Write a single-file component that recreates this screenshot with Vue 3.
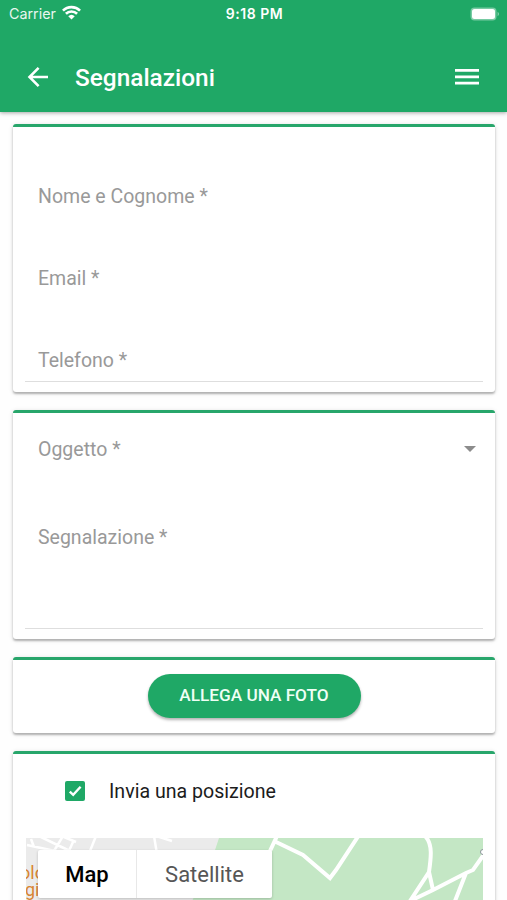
<template>
  <div class="page">
    <header class="header">
      <div class="status">
        <div class="status__left">
          <span class="status__carrier">Carrier</span>
          <svg class="status__wifi" viewBox="0 0 18 14">
            <path d="M0.9 5.2a11.6 11.6 0 0 1 16.2 0" />
            <path d="M3.7 8.2a7.6 7.6 0 0 1 10.6 0" />
            <path class="status__dot" d="M5.9 10.6a4.5 4.5 0 0 1 6.2 0L9 13.7z" />
          </svg>
        </div>
        <span class="status__time">9:18 PM</span>
        <div class="status__right">
          <svg class="status__battery" viewBox="0 0 30 14">
            <rect x="0.5" y="0.5" width="26" height="13" rx="4" fill="#fff" fill-opacity="0.4" />
            <rect x="2" y="2" width="23" height="10" rx="2.5" fill="#fff" />
            <path d="M27.6 4.8a2.5 2.5 0 0 1 0 4.4z" fill="#fff" fill-opacity="0.5" />
          </svg>
        </div>
      </div>

      <div class="toolbar">
        <svg class="toolbar__back" viewBox="0 0 22 22">
          <path d="M21 11H2.5M11.6 1.8L2.5 11l9.1 9.2" />
        </svg>
        <h1 class="toolbar__title">Segnalazioni</h1>
        <svg class="toolbar__menu" viewBox="0 0 24 16">
          <path d="M0 1.4h24M0 7.8h24M0 14.2h24" />
        </svg>
      </div>
    </header>

    <main class="content">
      <section class="card card--contacts">
        <div class="field" v-for="label in contacts" :key="label">
          <label class="label">{{ label }}</label>
        </div>
      </section>

      <section class="card card--report">
        <div class="select">
          <label class="label">Oggetto *</label>
          <svg class="select__arrow" viewBox="0 0 12 6">
            <path d="M0 0h12L6 6z" />
          </svg>
        </div>
        <div class="textarea">
          <label class="label">Segnalazione *</label>
        </div>
      </section>

      <section class="card card--photo">
        <button class="button" type="button">ALLEGA UNA FOTO</button>
      </section>

      <section class="card card--position">
        <div class="check" @click="sendPosition = !sendPosition">
          <span class="check__box" :class="{ active: sendPosition }">
            <svg v-if="sendPosition" viewBox="0 0 20 20">
              <path d="M4.8 10.6l3.4 3.2 7.4-8" />
            </svg>
          </span>
          <span class="check__text">Invia una posizione</span>
        </div>

        <div class="map">
          <svg class="map__tiles" viewBox="0 0 457 70">
            <path d="M193 0H457V70H163L189 12z" fill="#c4e7c5" />
            <path
              class="map__road map__road--thin"
              d="M5 1l3 8M1 7l28 6M15-1l31 15M37-2l-9 15M47 4l-5 11M70-2l-6 15M128-2l3 18M127-3l19 6M38-1l12 5"
            />
            <path
              class="map__road"
              d="M251-2l-7 15M248 3l29 14 27 23 6-8 23-35M399-2c8 8 6 22 4 36l-19 29M403 34l4 18M384 63l23-11 33-17 7-3 12-17M440 35l-11 28"
            />
            <text x="-6" y="41">olo</text>
            <text x="-1" y="58">gio</text>
            <circle cx="457" cy="14" r="2.5" fill="#fff" stroke="#8a9499" />
          </svg>
          <div class="map__types">
            <button
              v-for="type in mapTypes"
              :key="type"
              class="map__type"
              :class="{ active: mapType === type }"
              type="button"
              @click="mapType = type"
            >
              {{ type }}
            </button>
          </div>
        </div>
      </section>
    </main>
  </div>
</template>

<script setup>
import { ref } from 'vue'

const contacts = ['Nome e Cognome *', 'Email *', 'Telefono *']
const mapTypes = ['Map', 'Satellite']

const sendPosition = ref(true)
const mapType = ref('Map')
</script>

<style>
body {
  margin: 0;
  background: #fefefe;
}
</style>

<style scoped>
.page {
  height: 900px;
  overflow: hidden;
  font-family: Roboto, sans-serif;
  background: #fefefe;
}

.page * {
  box-sizing: border-box;
}

/* Header */
.header {
  position: relative;
  height: 112px;
  color: #fff;
  background: #1fa866;
  box-shadow: 0 1px 4px rgba(0, 0, 0, 0.35);
}

.status {
  display: grid;
  grid-template-columns: 1fr auto 1fr;
  align-items: center;
  height: 27px;
  padding: 0 7px 0 9px;
  font-family: Inter, sans-serif;
  font-size: 14px;
  line-height: 20px;
}

.status__left {
  display: flex;
  align-items: center;
  gap: 6px;
}

.status__carrier {
  font-size: 14.3px;
  opacity: 0.9;
}

.status__wifi {
  width: 19px;
  height: 15px;
  margin-top: -2px;
  fill: none;
  stroke: #fff;
  stroke-width: 2.5;
}

.status__dot {
  fill: #fff;
  stroke: none;
}

.status__time {
  font-size: 14px;
  font-weight: 600;
  letter-spacing: 0.5px;
}

.status__right {
  display: flex;
  justify-content: flex-end;
}

.status__battery {
  width: 30px;
  height: 14px;
}

.toolbar {
  display: flex;
  align-items: center;
  height: 85px;
  padding: 16px 28px 0 27px;
}

.toolbar__back {
  width: 22px;
  height: 22px;
  margin-top: -1px;
  fill: none;
  stroke: #fff;
  stroke-width: 2.6;
}

.toolbar__title {
  flex: 1;
  margin: 0 0 0 26px;
  font-weight: 500;
  font-size: 24.4px;
  line-height: 30px;
}

.toolbar__menu {
  width: 24px;
  height: 16px;
  margin-top: -2px;
  fill: none;
  stroke: #fff;
  stroke-width: 2.8;
}

/* Cards */
.content {
  padding: 12px 12px 0 13px;
}

.card {
  padding: 0 12px;
  margin-bottom: 18px;
  border-top: 3px solid #28a66b;
  border-radius: 3px;
  background: #fff;
  box-shadow: 0 2px 2px rgba(0, 0, 0, 0.24), 0 1px 5px rgba(0, 0, 0, 0.14);
}

.label {
  font-size: 19.5px;
  line-height: 24px;
  color: #999;
}

.card--contacts {
  height: 268px;
  padding-top: 9px;
}

.field {
  height: 82px;
  padding: 49px 13px 0;
}

.field:last-child {
  border-bottom: 1px solid #dedede;
}

.card--report {
  height: 229px;
}

.select {
  display: flex;
  align-items: center;
  justify-content: space-between;
  height: 72px;
  padding: 2px 7px 0 13px;
}

.select__arrow {
  width: 12px;
  height: 6px;
  margin-top: -3px;
  fill: #8c8c8c;
}

.textarea {
  height: 144px;
  padding: 41px 13px 0;
  border-bottom: 1px solid #dedede;
}

.card--photo {
  display: flex;
  justify-content: center;
  height: 76px;
  padding-top: 14px;
}

.button {
  width: 213px;
  height: 44px;
  padding: 0 0 2px;
  border: 0;
  border-radius: 23px;
  font-family: Roboto, sans-serif;
  font-weight: 500;
  font-size: 17.2px;
  color: #effff5;
  background: #1fa866;
  box-shadow: 0 2px 3px rgba(0, 0, 0, 0.3);
  cursor: pointer;
}

/* Position */
.card--position {
  height: 240px;
}

.check {
  display: flex;
  align-items: center;
  gap: 24px;
  height: 84px;
  padding: 0 0 11px 40px;
  cursor: pointer;
}

.check__box {
  width: 20px;
  height: 20px;
  border: 2px solid #1fa866;
  border-radius: 2px;
}

.check__box.active {
  border: 0;
  background: #1fa866;
}

.check__box svg {
  display: block;
  fill: none;
  stroke: #fff;
  stroke-width: 2.4;
}

.check__text {
  padding-top: 2px;
  font-size: 19.6px;
  line-height: 24px;
  color: #1c1c1c;
}

/* Map */
.map {
  position: relative;
  height: 70px;
  margin-left: 1px;
  background: #ebebeb;
  overflow: hidden;
}

.map__tiles {
  display: block;
  width: 457px;
  height: 70px;
  font-size: 18px;
  fill: #d98534;
}

.map__road {
  fill: none;
  stroke: #fff;
  stroke-width: 4;
}

.map__road--thin {
  stroke-width: 2.5;
}

.map__types {
  position: absolute;
  top: 12px;
  left: 12px;
  display: flex;
  width: 234px;
  height: 48px;
  border-radius: 2px;
  background: #fff;
  box-shadow: 0 1px 3px rgba(0, 0, 0, 0.2);
}

.map__type {
  flex: 1;
  padding: 0;
  border: 0;
  font-family: Roboto, sans-serif;
  font-size: 22px;
  color: #565656;
  background: none;
  cursor: pointer;
}

.map__type:first-child {
  flex: 0 0 99px;
  border-right: 1px solid #e8e8e8;
}

.map__type.active {
  font-weight: 500;
  color: #000;
}
</style>
